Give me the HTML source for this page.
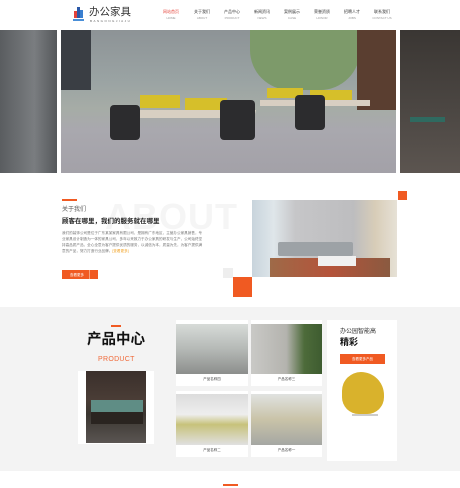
<!DOCTYPE html>
<html><head><meta charset="utf-8"><style>
*{margin:0;padding:0;box-sizing:border-box}
body{width:460px;height:488px;overflow:hidden;background:#fff;font-family:"Liberation Sans","Noto Sans CJK SC",sans-serif;position:relative}
.a{position:absolute}
.nav{font-size:4px;color:#333;text-align:center;width:30px;top:9px;line-height:6px}
.nav small{display:block;font-size:3px;color:#999}
</style></head><body>
<!-- header -->
<div class="a" style="left:74px;top:7px;width:9px;height:11px;">
<div class="a" style="left:0;top:4px;width:3px;height:7px;background:#e4433a"></div>
<div class="a" style="left:3px;top:0;width:3px;height:11px;background:#2b59a8"></div>
<div class="a" style="left:6px;top:3px;width:3px;height:8px;background:#3a7fd0"></div>
<div class="a" style="left:-1px;top:12px;width:11px;height:2px;background:#4a8fd8"></div>
</div>
<div class="a" style="left:89px;top:6px;font-size:10.5px;color:#333;line-height:12px">办公家具</div>
<div class="a" style="left:90px;top:19px;font-size:3px;color:#666;letter-spacing:1.5px">BANGONGJIAJU</div>
<div class="a nav" style="left:156px;color:#e4433a">网站首页<small>HOME</small></div>
<div class="a nav" style="left:187px">关于我们<small>ABOUT</small></div>
<div class="a nav" style="left:217px">产品中心<small>PRODUCT</small></div>
<div class="a nav" style="left:247px">新闻资讯<small>NEWS</small></div>
<div class="a nav" style="left:277px">案例展示<small>CASE</small></div>
<div class="a nav" style="left:307px">荣誉资质<small>HONOR</small></div>
<div class="a nav" style="left:337px">招聘人才<small>JOBS</small></div>
<div class="a nav" style="left:367px">联系我们<small>CONTACT US</small></div>
<!-- banner -->
<div class="a" style="left:0;top:30px;width:57px;height:143px;background:linear-gradient(90deg,#5a5d60,#7a7d80 60%,#55585b)"></div>
<div class="a" style="left:61px;top:30px;width:335px;height:143px;background:linear-gradient(180deg,#8d9396 0%,#9aa3a3 35%,#a6aca6 55%,#a9a8ae 70%,#a3a1a8 100%)"></div>
<div class="a" style="left:61px;top:30px;width:30px;height:60px;background:#3a3e44"></div>
<div class="a" style="left:250px;top:30px;width:110px;height:60px;background:#7d9a6a;border-radius:0 0 40px 40px"></div>
<div class="a" style="left:357px;top:30px;width:39px;height:80px;background:#5a3e30"></div>
<div class="a" style="left:140px;top:95px;width:40px;height:13px;background:#d6bf2a"></div>
<div class="a" style="left:185px;top:98px;width:42px;height:14px;background:#d6bf2a"></div>
<div class="a" style="left:267px;top:88px;width:36px;height:10px;background:#d6bf2a"></div>
<div class="a" style="left:310px;top:90px;width:42px;height:12px;background:#d6bf2a"></div>
<div class="a" style="left:120px;top:110px;width:135px;height:8px;background:#d8cfc2;transform:skewX(-15deg)"></div>
<div class="a" style="left:260px;top:100px;width:110px;height:6px;background:#d8cfc2"></div>
<div class="a" style="left:110px;top:105px;width:30px;height:35px;background:#2c2c2e;border-radius:4px"></div>
<div class="a" style="left:220px;top:100px;width:35px;height:40px;background:#2c2c2e;border-radius:4px"></div>
<div class="a" style="left:295px;top:95px;width:30px;height:35px;background:#2c2c2e;border-radius:4px"></div>
<div class="a" style="left:400px;top:30px;width:60px;height:143px;background:linear-gradient(180deg,#3a3633,#4d4844 60%,#5c5550)"></div>
<div class="a" style="left:410px;top:117px;width:35px;height:5px;background:#2f6a60"></div>
<!-- about -->
<div class="a" style="left:105px;top:196px;font-size:36px;font-weight:bold;color:#f5f5f5;letter-spacing:1px">ABOUT</div>
<div class="a" style="left:62px;top:199px;width:15px;height:2px;background:#f05a22"></div>
<div class="a" style="left:62px;top:204px;font-size:6px;color:#555">关于我们</div>
<div class="a" style="left:62px;top:215px;font-size:6.5px;font-weight:bold;color:#222">顾客在哪里，我们的服务就在哪里</div>
<div class="a" style="left:62px;top:230px;width:143px;font-size:3.6px;line-height:6.1px;color:#777">我们的装饰公司是位于广东某某家具有限公司，是拥有广东地区，主营办公家具销售，专业家具设计制造为一体的家具公司，多年以来致力于办公家具的研发与生产，公司始终坚持高品质产品，全心全意为客户提供优质的服务，以诚信为本，质量为先，为客户提供满意的产品，努力打造行业品牌。<span style="color:#f0a020">[查看更多]</span></div>
<div class="a" style="left:62px;top:270px;width:36px;height:9px;background:#f05a22"><div class="a" style="left:27px;top:0;width:1px;height:9px;background:#f7a07a"></div><div class="a" style="left:8px;top:2.5px;font-size:3.5px;color:#fff">查看更多</div></div>
<div class="a" style="left:398px;top:191px;width:9px;height:9px;background:#f05a22"></div>
<div class="a" style="left:223px;top:268px;width:10px;height:10px;background:#eee"></div>
<div class="a" style="left:233px;top:277px;width:19px;height:20px;background:#f05a22"></div>
<div class="a" style="left:252px;top:200px;width:145px;height:77px;background:linear-gradient(90deg,#c8d4dc 0%,#dfe6ea 15%,#c6c6c8 30%,#bdbdbf 70%,#d8cdb8 85%,#e6e1d6 100%)"></div>
<div class="a" style="left:278px;top:242px;width:75px;height:14px;background:#9da2a6;border-radius:2px"></div>
<div class="a" style="left:270px;top:258px;width:120px;height:19px;background:linear-gradient(90deg,#9e6a48,#b5533a,#8a5a40)"></div>
<div class="a" style="left:318px;top:256px;width:38px;height:10px;background:#f0f0f0"></div>
<!-- product -->
<div class="a" style="left:0;top:307px;width:460px;height:164px;background:#f3f3f3"></div>
<div class="a" style="left:111px;top:325px;width:10px;height:2px;background:#f05a22"></div>
<div class="a" style="left:87px;top:332px;font-size:14.5px;font-weight:bold;color:#111;line-height:17px">产品中心</div>
<div class="a" style="left:98px;top:356px;font-size:7px;color:#f06a3a;letter-spacing:.3px">PRODUCT</div>
<div class="a" style="left:78px;top:371px;width:76px;height:73px;background:#fff"></div>
<div class="a" style="left:86px;top:371px;width:60px;height:72px;background:linear-gradient(180deg,#3a2f2b,#4a3d36 40%,#3a3530 60%,#5a5552)"></div>
<div class="a" style="left:91px;top:400px;width:52px;height:12px;background:#5f8d85"></div>
<div class="a" style="left:91px;top:412px;width:52px;height:12px;background:#2a2420"></div>
<!-- grid -->
<div class="a" style="left:176px;top:320px;width:72px;height:66px;background:#fff"></div>
<div class="a" style="left:176px;top:324px;width:72px;height:50px;background:linear-gradient(180deg,#d7dbd8,#b5b9b6 50%,#8c8e8c)"></div>
<div class="a" style="left:180px;top:377px;width:64px;text-align:center;font-size:3.5px;color:#444">产品名称四</div>
<div class="a" style="left:251px;top:320px;width:71px;height:66px;background:#fff"></div>
<div class="a" style="left:251px;top:324px;width:71px;height:50px;background:linear-gradient(90deg,#c9c9c6,#b4b3ae 50%,#4d6b3a 75%,#3e5c30)"></div>
<div class="a" style="left:251px;top:377px;width:71px;text-align:center;font-size:3.5px;color:#444">产品名称三</div>
<div class="a" style="left:176px;top:391px;width:72px;height:66px;background:#fff"></div>
<div class="a" style="left:176px;top:394px;width:72px;height:51px;background:linear-gradient(180deg,#dcdcdc,#eeeeee 40%,#c7c27a 60%,#e0e0e0)"></div>
<div class="a" style="left:176px;top:448px;width:72px;text-align:center;font-size:3.5px;color:#444">产品名称二</div>
<div class="a" style="left:251px;top:391px;width:71px;height:66px;background:#fff"></div>
<div class="a" style="left:251px;top:394px;width:71px;height:51px;background:linear-gradient(180deg,#e0e2e0,#c9c3a8 50%,#a5a7a3)"></div>
<div class="a" style="left:251px;top:448px;width:71px;text-align:center;font-size:3.5px;color:#444">产品名称一</div>
<div class="a" style="left:327px;top:320px;width:70px;height:141px;background:#fff"></div>
<div class="a" style="left:340px;top:326px;font-size:6px;color:#333">办公园智能高</div>
<div class="a" style="left:340px;top:335px;font-size:9px;font-weight:bold;color:#111">精彩</div>
<div class="a" style="left:340px;top:354px;width:45px;height:10px;background:#f05a22;color:#fff;font-size:3.5px;text-align:center;line-height:10px">查看更多产品</div>
<div class="a" style="left:342px;top:372px;width:42px;height:42px;background:#d9b22c;border-radius:45% 55% 40% 40%"></div>
<div class="a" style="left:352px;top:414px;width:26px;height:2px;background:#ccc"></div>
<div class="a" style="left:223px;top:484px;width:15px;height:2px;background:#f05a22"></div>
</body></html>
